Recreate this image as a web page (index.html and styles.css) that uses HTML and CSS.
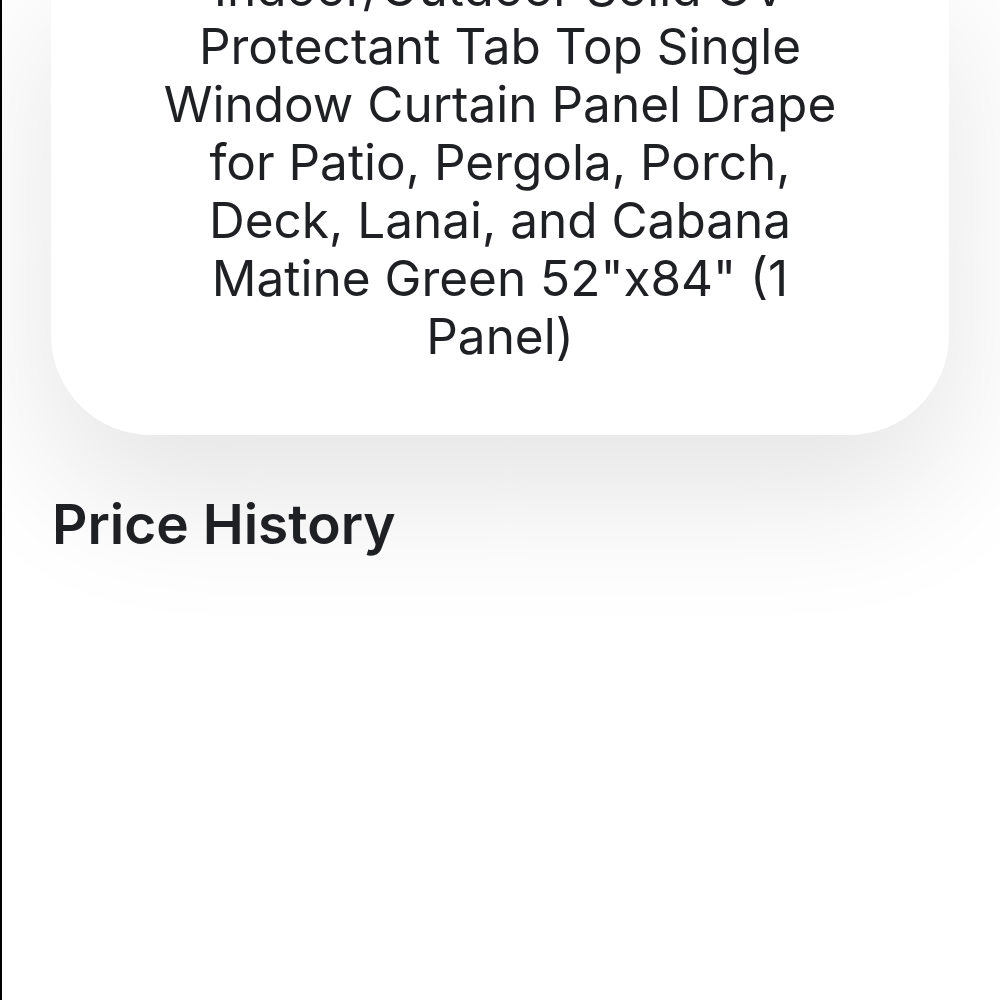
FILE: index.html
```html
<!DOCTYPE html>
<html lang="en">
<head>
    <meta charset="UTF-8">
    <meta name="viewport" content="width=device-width, initial-scale=1.0">
    <title>Product</title>
    <link rel="stylesheet" href="styles.css">
</head>
<body>
    <div class="page">
        <div class="product-card">
            <h1 class="product-title">Indoor/Outdoor Solid UV Protectant Tab Top Single Window Curtain Panel Drape for Patio, Pergola, Porch, Deck, Lanai, and Cabana Matine Green 52"x84" (1 Panel)</h1>
        </div>
        <h2 class="section-title">Price History</h2>
    </div>
</body>
</html>
```

FILE: styles.css
```css
html, body {
    margin: 0;
    padding: 0;
    background-color: #fff;
}

body {
    font-family: Inter, "Noto Sans", sans-serif;
    color: #1f2024;
    border-left: 2px solid #000;
    min-height: 1000px;
    box-sizing: border-box;
    overflow: hidden;
}

.page {
    padding: 0 51px 0 49px;
}

.product-card {
    background-color: #fff;
    margin-top: -41px;
    padding: 0 105px 70px;
    border-radius: 0 0 100px 100px;
    box-shadow: 0 60px 140px rgba(0, 0, 0, 0.11);
    text-align: center;
}

.product-title {
    margin: 0;
    font-size: 49.5px;
    font-weight: 400;
    line-height: 58px;
}

.section-title {
    margin: 59px 0 0 1px;
    font-size: 55px;
    font-weight: 600;
    line-height: 60px;
}
```
